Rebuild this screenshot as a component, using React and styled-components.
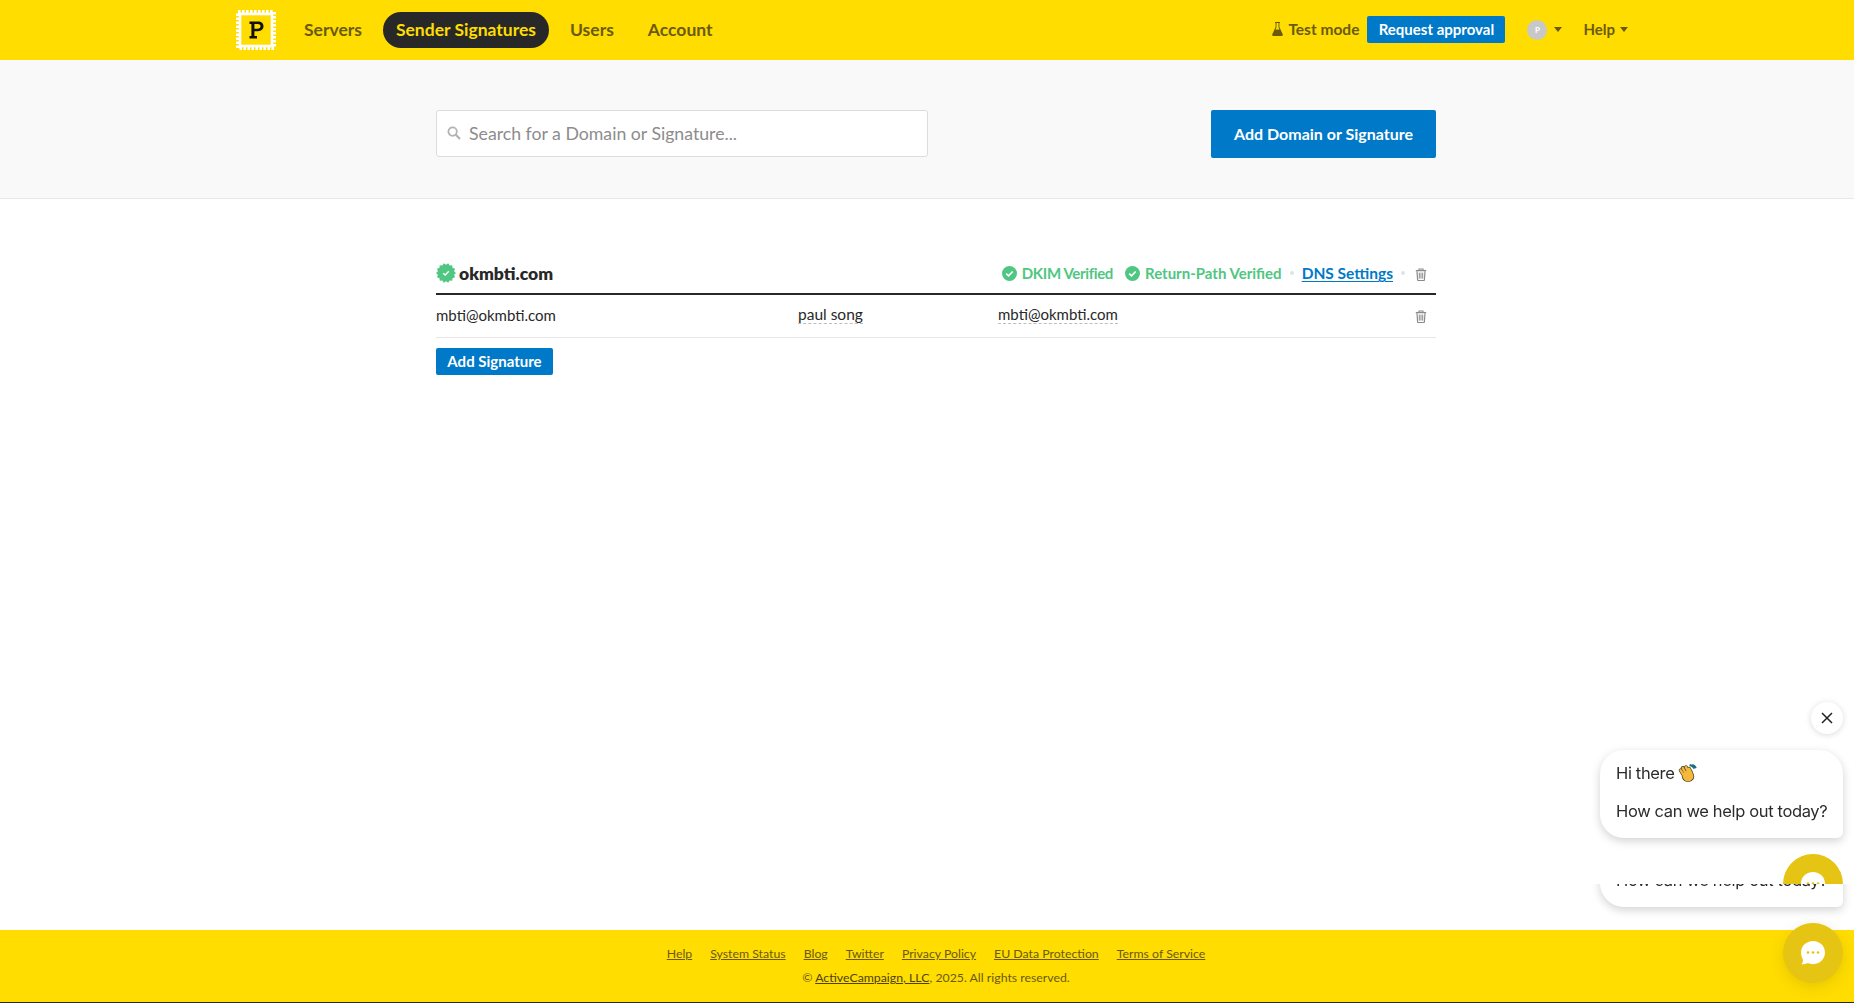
import React from 'react';
import styled, { createGlobalStyle } from 'styled-components';

const BRAND = '#ffdd00';
const INK = '#282828';
const BLUE = '#0079c8';
const GREEN = '#4fc681';

const GlobalStyle = createGlobalStyle`
  * { box-sizing: border-box; }
  html, body { margin: 0; padding: 0; background: ${INK}; overflow: hidden; }
  body { font-family: Lato, "Open Sans", sans-serif; color: ${INK}; }
  a { color: inherit; }
`;

const TrashIcon = () => (
  <svg width="12" height="13" viewBox="0 0 12 13" fill="none">
    <path d="M0.8 2.6h10.4" stroke="#8a8a8a" strokeWidth="1.3" />
    <path d="M4 2.4V1h4v1.4" stroke="#8a8a8a" strokeWidth="1.1" />
    <path d="M2 3.2l.6 8.6c0 .4.3.7.7.7h5.4c.4 0 .7-.3.7-.7l.6-8.6" stroke="#8a8a8a" strokeWidth="1.2" />
    <path d="M4.3 4.6v6M6 4.6v6M7.700 4.6v6" stroke="#8a8a8a" strokeWidth="1" />
  </svg>
);

const CheckCircle = () => (
  <svg width="15" height="15" viewBox="0 0 15 15">
    <circle cx="7.5" cy="7.5" r="7.5" fill={GREEN} />
    <path d="M4.2 7.7l2.3 2.2 4.2-4.4" fill="none" stroke="#fff" strokeWidth="1.7" />
  </svg>
);

const badgePoints = () => {
  const pts = [];
  for (let i = 0; i < 28; i++) {
    const r = i % 2 ? 8.3 : 10;
    const a = (i / 28) * Math.PI * 2;
    pts.push(`${(10 + r * Math.cos(a)).toFixed(2)},${(10 + r * Math.sin(a)).toFixed(2)}`);
  }
  return pts.join(' ');
};

const VerifiedBadge = () => (
  <svg width="20" height="20" viewBox="0 0 20 20">
    <polygon points={badgePoints()} fill={GREEN} />
    <path d="M7.2 10.200l2 1.900 3.600-3.800" fill="none" stroke="#fff" strokeWidth="1.4" />
  </svg>
);

const Logo = () => (
  <svg width="40" height="40" viewBox="0 0 40 40">
    <rect x="2" y="2" width="36" height="36" fill="none" stroke="#fff" strokeWidth="4" strokeDasharray="2.6 1.4" />
    <rect x="4" y="4" width="32" height="32" fill="none" stroke="#fff" strokeWidth="2.6" />
    <path
      d="M13.5 11.5h8.5c3.4 0 5.5 1.9 5.5 4.8s-2.1 4.9-5.5 4.9h-3.6v4.9h2.6v2.4h-7.5v-2.400h1.900V13.900h-1.900zM18.400 13.900v4.900h3.200c1.800 0 2.900-.9 2.900-2.500s-1.100-2.400-2.900-2.400z"
      fill="#111"
    />
  </svg>
);

const FlaskIcon = () => (
  <svg width="11" height="14" viewBox="0 0 11 14">
    <path d="M3 0h5v1H7.400v4l3.400 7.400c.3.800-.2 1.600-1 1.600H1.200c-.8 0-1.300-.8-1-1.600L3.600 5V1H3z" fill="#6a5a10" />
    <path d="M4.500 1h2v4.200l1 2.300h-4l1-2.300z" fill={BRAND} />
  </svg>
);

const SearchIcon = () => (
  <svg width="14" height="14" viewBox="0 0 14 14" fill="none">
    <circle cx="5.6" cy="5.6" r="4.2" stroke="#b3b3b3" strokeWidth="1.8" />
    <path d="M8.800 8.800l4.200 4.200" stroke="#b3b3b3" strokeWidth="2.2" />
  </svg>
);

const Page = styled.div`
  width: 100%;
  height: 1002px;
  display: flex;
  flex-direction: column;
  background: #fff;
  overflow: hidden;
`;

const Header = styled.header`
  height: 60px;
  flex: none;
  background: ${BRAND};
  display: flex;
  align-items: center;
  padding: 0 226px 0 236px;
`;

const Nav = styled.nav`
  display: flex;
  align-items: center;
  margin-left: 15px;
  gap: 8px;
`;

const NavItem = styled.a`
  height: 36px;
  display: flex;
  align-items: center;
  padding: 0 13px 2px;
  border-radius: 18px;
  font-size: 17.5px;
  font-weight: 700;
  color: ${(p) => (p.$active ? BRAND : '#6a5a10')};
  background: ${(p) => (p.$active ? INK : 'transparent')};
`;

const HeaderRight = styled.div`
  margin-left: auto;
  display: flex;
  align-items: center;
  padding-bottom: 1px;
  font-size: 15.5px;
  font-weight: 700;
  color: #6a5a10;
`;

const TestMode = styled.span`
  display: flex;
  align-items: center;
  gap: 5px;
  padding-bottom: 1px;
`;

const SmallButton = styled.a`
  display: flex;
  align-items: center;
  justify-content: center;
  height: 27px;
  padding-bottom: 2px;
  border-radius: 2px;
  background: ${BLUE};
  color: #fff;
  font-size: 15px;
  font-weight: 700;
`;

const ApproveButton = styled(SmallButton)`
  width: 138px;
  margin-left: 8px;
`;

const Avatar = styled.span`
  width: 20px;
  height: 20px;
  margin-left: 22px;
  border-radius: 50%;
  background: #c8c8c8;
  color: #fff;
  font-size: 8px;
  display: flex;
  align-items: center;
  justify-content: center;
`;

const Caret = styled.span`
  width: 0;
  height: 0;
  margin-left: ${(p) => p.$gap || 7}px;
  border-left: 4px solid transparent;
  border-right: 4px solid transparent;
  border-top: 5px solid #6a5a10;
`;

const HelpLink = styled.span`
  margin-left: 21px;
  font-size: 15px;
  padding-bottom: 1px;
`;

const SearchBand = styled.section`
  height: 139px;
  flex: none;
  background: #f9f9f9;
  border-bottom: 1px solid #e9e9e9;
  display: flex;
  justify-content: center;
  align-items: flex-start;
  padding: 50px 0 0 18px;
`;

const Container = styled.div`
  width: 1000px;
  display: flex;
  justify-content: space-between;
  align-items: flex-start;
`;

const SearchBox = styled.div`
  width: 492px;
  height: 47px;
  background: #fff;
  border: 1px solid #dcdcdc;
  border-radius: 3px;
  display: flex;
  align-items: center;
  gap: 8px;
  padding: 0 0 1px 10px;
  font-size: 17.7px;
  color: #8c8c8c;
`;

const PrimaryButton = styled.a`
  width: 225px;
  height: 48px;
  display: flex;
  align-items: center;
  justify-content: center;
  padding-bottom: 2px;
  background: ${BLUE};
  color: #fff;
  border-radius: 2px;
  font-size: 16px;
  font-weight: 700;
`;

const Main = styled.main`
  flex: 1;
  display: flex;
  justify-content: center;
  padding: 60px 0 0 18px;
`;

const Domain = styled.div`
  width: 1000px;
`;

const DomainHead = styled.div`
  height: 36px;
  display: flex;
  align-items: center;
  border-bottom: 2px solid ${INK};
  padding-bottom: 6px;
`;

const DomainName = styled.h2`
  margin: 0 0 0 3px;
  font-size: 17.5px;
  font-weight: 800;
  display: flex;
`;

const DomainStatus = styled.div`
  margin-left: auto;
  display: flex;
  align-items: center;
  padding-right: 9px;
  font-size: 15px;
  font-weight: 700;
`;

const Verified = styled.span`
  display: flex;
  align-items: center;
  gap: 5px;
  margin-left: ${(p) => p.$gap || 0}px;
  color: ${GREEN};
  letter-spacing: ${(p) => (p.$tight ? '-0.35px' : 'normal')};
`;

const Dot = styled.span`
  width: 4px;
  height: 4px;
  border-radius: 50%;
  background: #dfe3e6;
  margin: 0 ${(p) => p.$right || 8}px 0 8px;
`;

const DnsLink = styled.a`
  color: ${BLUE};
  font-size: 15.5px;
  text-decoration: underline;
  text-underline-offset: 2px;
  text-decoration-thickness: 1px;
`;

const IconSlot = styled.span`
  display: flex;
  margin-top: ${(p) => p.$drop}px;
`;

const SignatureRow = styled.div`
  height: 43px;
  display: grid;
  grid-template-columns: 362px 200px 1fr auto;
  align-items: center;
  border-bottom: 1px solid #e6e6e6;
  font-size: 15px;
  padding: 0 9px 3px 0;
`;

const Editable = styled.span`
  justify-self: start;
  border-bottom: 1px dashed #bdbdbd;
  line-height: 18px;
  font-size: ${(p) => p.$size || 15}px;
`;

const AddSignature = styled(SmallButton)`
  margin-top: 10px;
  width: 117px;
`;

const Footer = styled.footer`
  height: 72px;
  flex: none;
  background: ${BRAND};
  color: #6a5a10;
  font-size: 12.3px;
  display: flex;
  flex-direction: column;
  align-items: center;
  padding: 16px 0 0 18px;
  gap: 9px;
`;

const FooterLinks = styled.div`
  display: flex;
  gap: 18px;
  a {
    text-decoration: underline;
  }
`;

const Copyright = styled.div`
  a {
    text-decoration: underline;
    color: #4d4208;
  }
`;

const ChatWidget = styled.div`
  position: fixed;
  right: 0;
  top: 690px;
  width: 274px;
  height: 313px;
  font-family: Inter, sans-serif;
  color: #2b2b2b;
  pointer-events: none;
`;

const CloseButton = styled.div`
  position: absolute;
  left: 231px;
  top: 12px;
  width: 32px;
  height: 32px;
  border-radius: 50%;
  background: #fff;
  box-shadow: 0 1px 6px rgba(0, 0, 0, 0.15);
  display: flex;
  align-items: center;
  justify-content: center;
`;

const Bubble = styled.div`
  position: absolute;
  left: 20px;
  top: 60px;
  width: 243px;
  height: 88px;
  padding: 14px 16px;
  background: #fff;
  border-radius: 24px 24px 6px 24px;
  box-shadow: 0 3px 10px rgba(0, 0, 0, 0.18);
  font-size: 16.5px;
  letter-spacing: -0.35px;
  line-height: 19px;
  white-space: nowrap;
  p {
    margin: 0 0 19px;
    display: flex;
    align-items: center;
    gap: 4px;
  }
`;

const Clip = styled.div`
  position: absolute;
  left: 0;
  top: ${(p) => p.$top}px;
  width: 274px;
  height: ${(p) => p.$height}px;
  overflow: hidden;
`;

const ClippedBubble = styled(Bubble)`
  top: -65px;
`;

const ChatCircle = styled.div`
  position: absolute;
  left: ${(p) => p.$left}px;
  top: ${(p) => p.$top}px;
  width: 60px;
  height: 60px;
  border-radius: 50%;
  background: #e6c414;
  display: flex;
  align-items: center;
  justify-content: center;
`;

const ChatButton = styled(ChatCircle)`
  box-shadow: 0 4px 14px rgba(120, 100, 0, 0.18);
`;

const ChatIcon = () => (
  <svg width="26" height="26" viewBox="0 0 26 26">
    <path d="M13 1c6.800 0 12 5 12 11.600S19.800 24.200 13 24.200c-2 0-3.500-.3-5.200-1.100-1.800.9-4 1.300-6.300 1.200 1-1.300 1.500-2.600 1.500-4.300C1.900 18 1 15.500 1 12.600 1 6 6.200 1 13 1z" fill="#fff" />
    <circle cx="8" cy="12.500" r="1.300" fill="#e6c414" />
    <circle cx="13" cy="12.500" r="1.300" fill="#e6c414" />
    <circle cx="18" cy="12.500" r="1.300" fill="#e6c414" />
  </svg>
);

// waving hand, the fingers are a dark stroke with a thinner yellow one on top
const fingers = 'M5 10L2.500 6M7 8.500L4.500 3.800M10 8L7.500 3M12.500 8.500L10.500 4.500';

const WaveIcon = () => (
  <svg width="19" height="19" viewBox="0 0 18 18">
    <path d="M11 1c2 .3 3.500 1.300 4.600 3.400M13.500.8c1.600.5 2.700 1.500 3.500 3" stroke="#1b6f80" strokeWidth="1.800" fill="none" />
    <path d={fingers} stroke="#3a3a2a" strokeWidth="3.600" strokeLinecap="round" fill="none" />
    <ellipse cx="9.500" cy="11.500" rx="5.800" ry="5.600" fill="#3a3a2a" />
    <path d={fingers} stroke="#f5b83a" strokeWidth="2.400" strokeLinecap="round" fill="none" />
    <ellipse cx="9.500" cy="11.500" rx="5.100" ry="5" fill="#f5b83a" />
  </svg>
);

const footerLinks = ['Help', 'System Status', 'Blog', 'Twitter', 'Privacy Policy', 'EU Data Protection', 'Terms of Service'];

export default function App() {
  return (
    <>
      <GlobalStyle />
      <Page>
        <Header>
          <Logo />
          <Nav>
            <NavItem>Servers</NavItem>
            <NavItem $active>Sender Signatures</NavItem>
            <NavItem>Users</NavItem>
            <NavItem>Account</NavItem>
          </Nav>
          <HeaderRight>
            <TestMode>
              <FlaskIcon />
              Test mode
            </TestMode>
            <ApproveButton>Request approval</ApproveButton>
            <Avatar>P</Avatar>
            <Caret />
            <HelpLink>Help</HelpLink>
            <Caret $gap={5} />
          </HeaderRight>
        </Header>
        <SearchBand>
          <Container>
            <SearchBox>
              <SearchIcon />
              Search for a Domain or Signature...
            </SearchBox>
            <PrimaryButton>Add Domain or Signature</PrimaryButton>
          </Container>
        </SearchBand>
        <Main>
          <Domain>
            <DomainHead>
              <VerifiedBadge />
              <DomainName>okmbti.com</DomainName>
              <DomainStatus>
                <Verified $tight>
                  <CheckCircle />
                  DKIM Verified
                </Verified>
                <Verified $gap={12}>
                  <CheckCircle />
                  Return-Path Verified
                </Verified>
                <Dot />
                <DnsLink>DNS Settings</DnsLink>
                <Dot $right={10} />
                <IconSlot $drop={2}>
                  <TrashIcon />
                </IconSlot>
              </DomainStatus>
            </DomainHead>
            <SignatureRow>
              <span>mbti@okmbti.com</span>
              <Editable $size={15.5}>paul song</Editable>
              <Editable>mbti@okmbti.com</Editable>
              <IconSlot $drop={3}>
                <TrashIcon />
              </IconSlot>
            </SignatureRow>
            <AddSignature>Add Signature</AddSignature>
          </Domain>
        </Main>
        <Footer>
          <FooterLinks>
            {footerLinks.map((label) => (
              <a key={label}>{label}</a>
            ))}
          </FooterLinks>
          <Copyright>
            © <a>ActiveCampaign, LLC</a>, 2025. All rights reserved.
          </Copyright>
        </Footer>
      </Page>
      <ChatWidget>
        <CloseButton>
          <svg width="12" height="12" viewBox="0 0 12 12">
            <path d="M1 1l10 10M11 1L1 11" stroke="#222" strokeWidth="1.5" />
          </svg>
        </CloseButton>
        <Clip $top={0} $height={194}>
          <Bubble>
            <p>
              Hi there <WaveIcon />
            </p>
            How can we help out today?
          </Bubble>
          <ChatCircle $left={203} $top={164}>
            <ChatIcon />
          </ChatCircle>
        </Clip>
        <Clip $top={194} $height={40}>
          <ClippedBubble>
            <p>
              Hi there <WaveIcon />
            </p>
            How can we help out today?
          </ClippedBubble>
        </Clip>
        <ChatButton $left={203} $top={233}>
          <ChatIcon />
        </ChatButton>
      </ChatWidget>
    </>
  );
}
